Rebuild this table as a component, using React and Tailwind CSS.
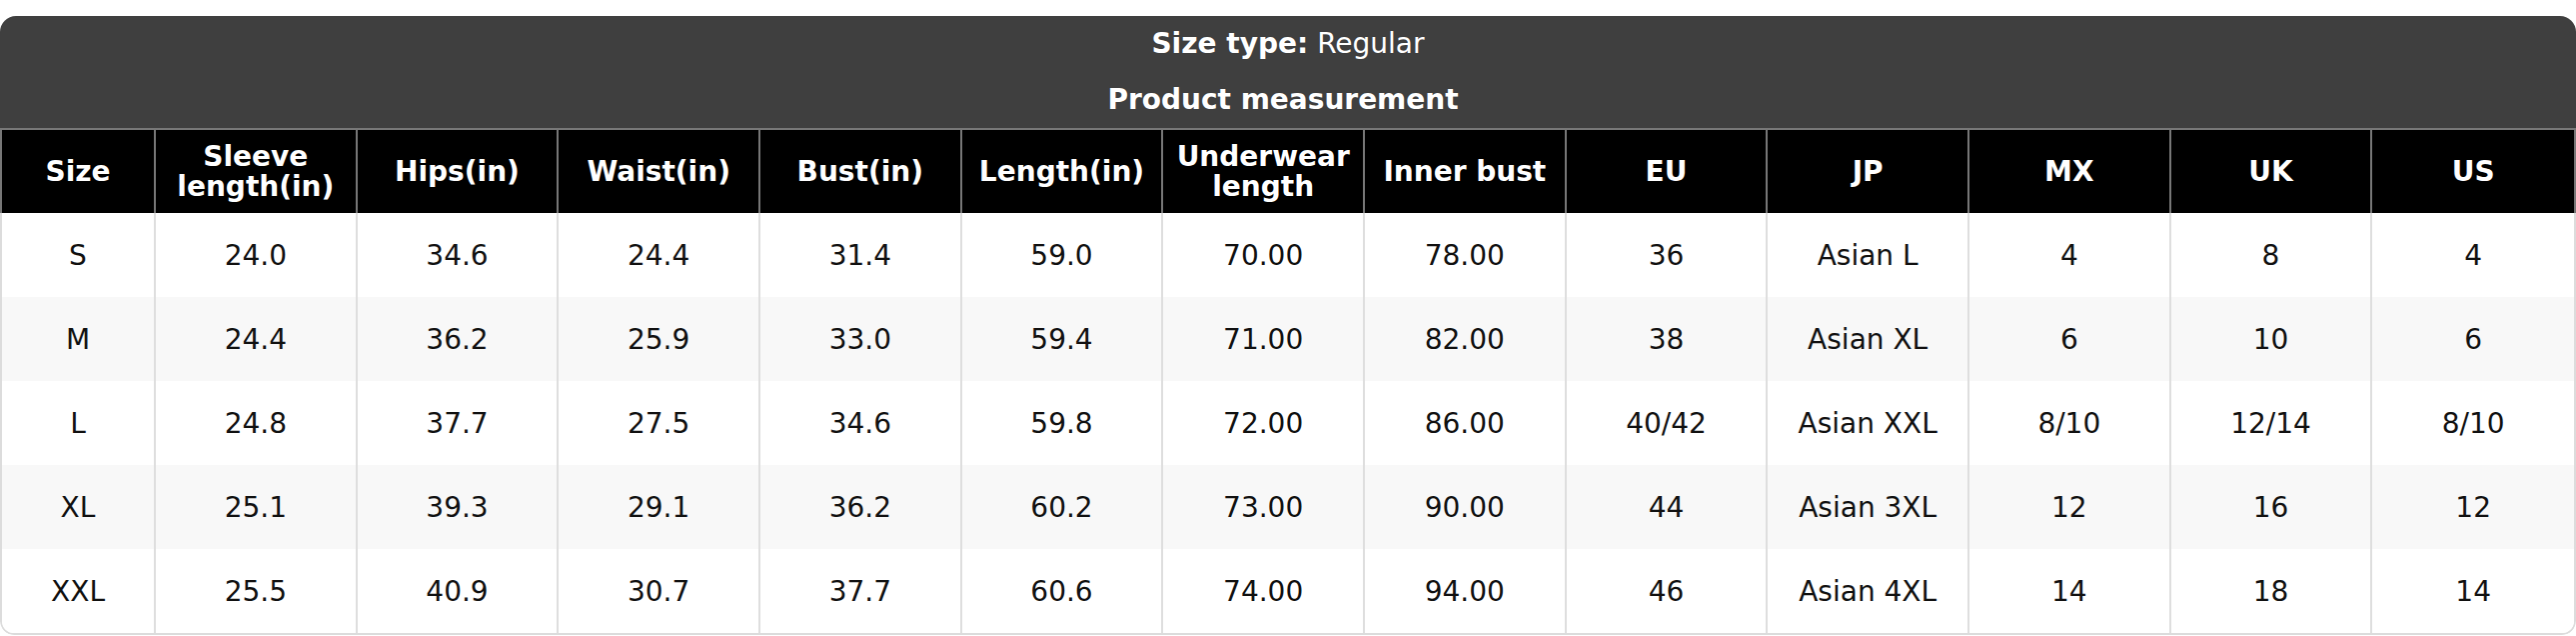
import React from 'react';

const headers = [
  ['Size'],
  ['Sleeve', 'length(in)'],
  ['Hips(in)'],
  ['Waist(in)'],
  ['Bust(in)'],
  ['Length(in)'],
  ['Underwear', 'length'],
  ['Inner bust'],
  ['EU'],
  ['JP'],
  ['MX'],
  ['UK'],
  ['US'],
];

const rows = [
  ['S', '24.0', '34.6', '24.4', '31.4', '59.0', '70.00', '78.00', '36', 'Asian L', '4', '8', '4'],
  ['M', '24.4', '36.2', '25.9', '33.0', '59.4', '71.00', '82.00', '38', 'Asian XL', '6', '10', '6'],
  ['L', '24.8', '37.7', '27.5', '34.6', '59.8', '72.00', '86.00', '40/42', 'Asian XXL', '8/10', '12/14', '8/10'],
  ['XL', '25.1', '39.3', '29.1', '36.2', '60.2', '73.00', '90.00', '44', 'Asian 3XL', '12', '16', '12'],
  ['XXL', '25.5', '40.9', '30.7', '37.7', '60.6', '74.00', '94.00', '46', 'Asian 4XL', '14', '18', '14'],
];

const cols = 'grid grid-cols-[154px_repeat(12,minmax(0,1fr))]';

export default function App() {
  return (
    <div className="bg-white pt-4 font-['DejaVu_Sans',sans-serif] text-[28px]">
      <div className="rounded-t-[16px] rounded-b-[14px] overflow-hidden">
        <div className="bg-[#3f3f3f] text-white text-center">
          <div className="h-14 flex items-center justify-center">
            <span className="font-bold">Size type:</span>
            <span className="ml-[9px]">Regular</span>
          </div>
          <div className="h-14 flex items-center justify-center font-bold pr-[10px]">Product measurement</div>
        </div>

        <div className={`${cols} h-[85px] bg-black text-white font-bold border-t-2 border-x-2 border-[#777]`}>
          {headers.map((h, i) => (
            <div
              key={i}
              className={`flex flex-col items-center justify-center text-center leading-[30px] ${i < headers.length - 1 ? 'border-r-2 border-[#777]' : ''}`}
            >
              {h.map((line) => (
                <span key={line}>{line}</span>
              ))}
            </div>
          ))}
        </div>

        <div className="border-x-2 border-b-2 border-[#dcdcdc] rounded-b-[14px] overflow-hidden text-[#111]">
          {rows.map((r, ri) => (
            <div key={ri} className={`${cols} h-[84px] ${ri % 2 === 1 ? 'bg-[#f8f8f8]' : 'bg-white'}`}>
              {r.map((v, ci) => (
                <div
                  key={ci}
                  className={`flex items-center justify-center pt-[2px] ${ci < r.length - 1 ? 'border-r-2 border-[#dedede]' : ''}`}
                >
                  {v}
                </div>
              ))}
            </div>
          ))}
        </div>
      </div>
    </div>
  );
}
